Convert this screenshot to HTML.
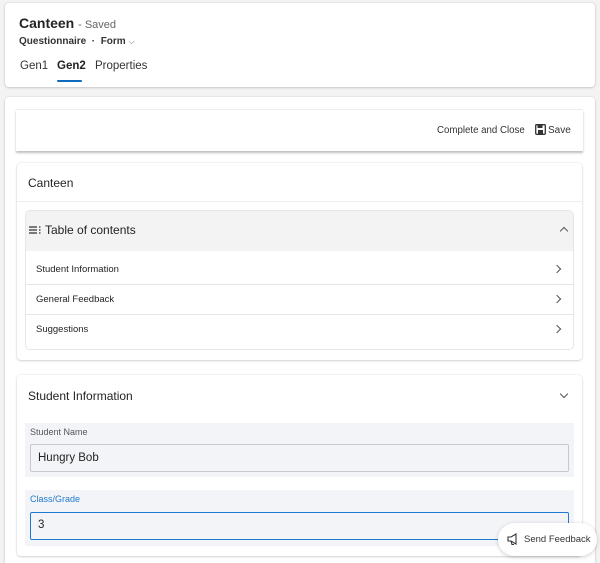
<!DOCTYPE html>
<html style="height:563px;overflow:hidden"><head><style>
*{box-sizing:border-box;margin:0;padding:0}
body{width:600px;height:563px;overflow:hidden;background:#f3f3f3;font-family:"Liberation Sans",sans-serif;position:relative;color:#242424}
.abs{position:absolute}
.card{background:#fff;border-radius:4px;box-shadow:0 0 2px rgba(0,0,0,.12),0 1px 2px rgba(0,0,0,.14)}
.chev{position:absolute;width:6px;height:6px;border-right:1.3px solid #555;border-bottom:1.3px solid #555}
</style></head><body>
<div class="abs card" style="left:5px;top:3px;width:590px;height:84px"></div>
<div class="abs" style="left:19px;top:15px;font-size:14px;font-weight:bold">Canteen <span style="font-size:11px;font-weight:normal;color:#666">- Saved</span></div>
<div class="abs" style="left:19px;top:36px;font-size:10px;font-weight:bold;color:#333">Questionnaire &nbsp;·&nbsp; <span style="font-weight:bold">Form</span> <span style="font-weight:normal;color:#666;font-size:8px">⌵</span></div>
<div class="abs" style="left:20px;top:60px;font-size:11.5px;color:#333">Gen1</div>
<div class="abs" style="left:57px;top:60px;font-size:11.5px;font-weight:bold">Gen2</div>
<div class="abs" style="left:57px;top:80px;width:25px;height:2px;background:#0f6cbd;border-radius:1px"></div>
<div class="abs" style="left:95px;top:60px;font-size:11.5px;color:#333">Properties</div>

<div class="abs card" style="left:5px;top:97px;width:590px;height:480px"></div>
<div class="abs" style="left:16px;top:109px;width:567px;height:42px;background:#fff;box-shadow:0 2px 2px rgba(0,0,0,.25);border-top:1px solid #eee"></div>
<div class="abs" style="left:437px;top:125px;font-size:9.7px;color:#333">Complete and Close</div>
<svg class="abs" style="left:535px;top:124px" width="11" height="11" viewBox="0 0 11 11"><rect x="0.7" y="0.7" width="9.6" height="9.6" rx="1" fill="none" stroke="#333" stroke-width="1.3"/><rect x="2.5" y="1" width="5" height="3" fill="#333"/><rect x="3" y="6" width="5" height="4" fill="#333"/></svg>
<div class="abs" style="left:548px;top:125px;font-size:10px;color:#333">Save</div>

<div class="abs card" style="left:17px;top:163px;width:565px;height:197px"></div>
<div class="abs" style="left:28px;top:176px;font-size:12px">Canteen</div>
<div class="abs" style="left:17px;top:201px;width:565px;height:1px;background:#eee"></div>
<div class="abs" style="left:25px;top:210px;width:549px;height:140px;border:1px solid #e6e6e6;border-radius:5px;background:#fff;overflow:hidden">
<div style="height:40px;background:#f3f3f3"></div>
<div style="height:34px;border-bottom:1px solid #e6e6e6"></div>
<div style="height:30px;border-bottom:1px solid #e6e6e6"></div>
</div>
<svg class="abs" style="left:29px;top:226px" width="12" height="8" viewBox="0 0 12 8"><path d="M0 1h8M0 4h8M0 7h8M10 1h1.5M10 4h1.5M10 7h1.5" stroke="#333" stroke-width="1.2"/></svg>
<div class="abs" style="left:45px;top:223px;font-size:12px">Table of contents</div>
<div class="chev" style="left:561px;top:228px;transform:rotate(-135deg)"></div>
<div class="abs" style="left:36px;top:264px;font-size:9.5px">Student Information</div>
<div class="abs" style="left:36px;top:294px;font-size:9.5px">General Feedback</div>
<div class="abs" style="left:36px;top:324px;font-size:9.5px">Suggestions</div>
<div class="chev" style="left:554px;top:266px;transform:rotate(-45deg)"></div>
<div class="chev" style="left:554px;top:296px;transform:rotate(-45deg)"></div>
<div class="chev" style="left:554px;top:326px;transform:rotate(-45deg)"></div>

<div class="abs card" style="left:17px;top:375px;width:565px;height:181px"></div>
<div class="abs" style="left:28px;top:389px;font-size:12px">Student Information</div>
<div class="chev" style="left:561px;top:391px;transform:rotate(45deg)"></div>
<div class="abs" style="left:25px;top:423px;width:549px;height:54px;background:#f3f4f7"></div>
<div class="abs" style="left:30px;top:427px;font-size:9px;color:#555">Student Name</div>
<div class="abs" style="left:30px;top:444px;width:539px;height:28px;border:1px solid #c8c8c8;border-radius:2px;background:#f3f4f7;font-size:11.5px;padding:7px 7px">Hungry Bob</div>
<div class="abs" style="left:25px;top:490px;width:549px;height:56px;background:#f3f4f7"></div>
<div class="abs" style="left:30px;top:494px;font-size:9px;color:#1f78d1">Class/Grade</div>
<div class="abs" style="left:30px;top:512px;width:539px;height:28px;border:1.5px solid #1f78d1;border-radius:2px;background:#f3f4f7;font-size:11.5px;padding:6px 7px">3</div>

<div class="abs" style="left:498px;top:523px;width:99px;height:33px;background:#fff;border-radius:17px;box-shadow:0 1px 4px rgba(0,0,0,.2)"></div>
<svg class="abs" style="left:507px;top:533px" width="12" height="12" viewBox="0 0 12 12"><path d="M1 4h3l5-3v10l-5-3H1zM4 8l1 3.5h2" fill="none" stroke="#333" stroke-width="1.1"/></svg>
<div class="abs" style="left:524px;top:534px;font-size:9.5px;color:#333">Send Feedback</div>
</body></html>
